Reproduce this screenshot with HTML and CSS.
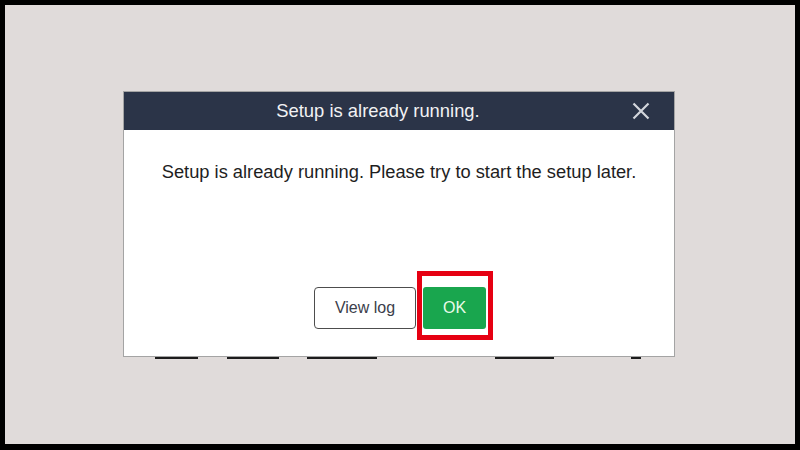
FILE: index.html
```html
<!DOCTYPE html>
<html lang="en">
<head>
  <meta charset="UTF-8">
  <title>Setup is already running.</title>
  <link rel="stylesheet" href="styles.css">
</head>
<body>

  <div class="frame">
    <div class="dialog">
      <!-- Barra de titulo -->
      <div class="titlebar">
        <span class="title">Setup is already running.</span>
        <svg class="close" width="18" height="18" viewBox="0 0 18 18">
          <path d="M1.5 1.5 L16.5 16.5 M16.5 1.5 L1.5 16.5" stroke="#d3d6dc" stroke-width="2.2" fill="none"/>
        </svg>
      </div>

      <div class="content">
        <p class="message">Setup is already running. Please try to start the setup later.</p>

        <div class="buttons">
          <button class="btn btn-log">View log</button>
          <span class="highlight">
            <button class="btn btn-ok">OK</button>
          </span>
        </div>
      </div>
    </div>

    <!-- restos de la ventana de detras -->
    <div class="behind">
      <span></span><span></span><span></span><span></span><span></span>
    </div>
  </div>

</body>
</html>
```

FILE: styles.css
```css
body {
  margin: 0;
  font-family: "Liberation Sans", Arial, sans-serif;
}
.frame {
  box-sizing: border-box;
  width: 800px;
  height: 450px;
  border: 5px solid #000;
  border-bottom-width: 6px;
  background: #e0dbda;
  padding-top: 86px;
  display: flex;
  flex-direction: column;
  align-items: center;
}
.dialog {
  width: 550px;
  border: 1px solid #a4a4a4;
  background: #fff;
  margin-left: -2px;
}
.titlebar {
  height: 38px;
  background: #2b3448;
  display: flex;
  align-items: center;
  padding-right: 24px;
}
.title {
  flex: 1;
  text-align: center;
  color: #f2f2f4;
  font-size: 18.4px;
}
.close {
  display: block;
}
.content {
  padding: 32px 0 27px;
  text-align: center;
}
.message {
  margin: 0;
  font-size: 18.3px;
  line-height: 20px;
  color: #1e1e1e;
}
.buttons {
  margin-top: 105px;
  display: flex;
  justify-content: center;
  gap: 7px;
  margin-left: 2px;
}
.btn {
  height: 42px;
  font-family: "Liberation Sans", Arial, sans-serif;
  font-size: 16px;
  border-radius: 4px;
  cursor: pointer;
}
.btn-log {
  width: 102px;
  background: #fff;
  color: #3b404b;
  border: 1px solid #4d4d4d;
}
.btn-ok {
  width: 63px;
  background: #19a64e;
  color: #e9fbe9;
  border: none;
  border-radius: 3px;
}
.highlight {
  position: relative;
  display: block;
}
.highlight::after {
  content: "";
  position: absolute;
  top: -16px;
  left: -6px;
  right: -7px;
  bottom: -11px;
  border: 5px solid #e60012;
  pointer-events: none;
}
.behind {
  width: 552px;
  height: 2px;
  display: flex;
  margin-left: -2px;
}
.behind span {
  height: 2px;
  background: #1c1c1c;
}
.behind span:nth-child(1) { margin-left: 32px; width: 43px; }
.behind span:nth-child(2) { margin-left: 29px; width: 52px; }
.behind span:nth-child(3) { margin-left: 28px; width: 70px; }
.behind span:nth-child(4) { margin-left: 118px; width: 59px; }
.behind span:nth-child(5) { margin-left: 77px; width: 10px; }
```
